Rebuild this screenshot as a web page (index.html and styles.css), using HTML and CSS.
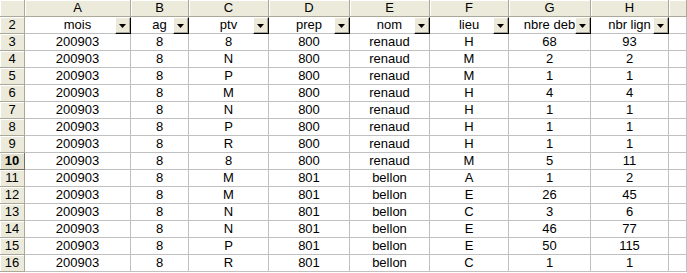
FILE: index.html
```html
<!DOCTYPE html>
<html>
<head>
<meta charset="utf-8">
<link rel="stylesheet" href="styles.css">
</head>
<body>
<div class="sheet">
  <div class="hd corner"></div>
  <div class="hd col">A</div><div class="hd col">B</div><div class="hd col">C</div><div class="hd col">D</div><div class="hd col">E</div><div class="hd col">F</div><div class="hd col">G</div><div class="hd col">H</div><div class="hd col"></div>

  <div class="hd row">2</div>
  <div class="c f">mois<span class="dd"></span></div><div class="c f">ag<span class="dd"></span></div><div class="c f">ptv<span class="dd"></span></div><div class="c f">prep<span class="dd"></span></div><div class="c f">nom<span class="dd"></span></div><div class="c f">lieu<span class="dd"></span></div><div class="c f">nbre deb<span class="dd"></span></div><div class="c f">nbr lign<span class="dd"></span></div><div class="c"></div>

  <div class="hd row">3</div>
  <div class="c">200903</div><div class="c">8</div><div class="c">8</div><div class="c">800</div><div class="c">renaud</div><div class="c">H</div><div class="c">68</div><div class="c">93</div><div class="c"></div>
  <div class="hd row">4</div>
  <div class="c">200903</div><div class="c">8</div><div class="c">N</div><div class="c">800</div><div class="c">renaud</div><div class="c">M</div><div class="c">2</div><div class="c">2</div><div class="c"></div>
  <div class="hd row">5</div>
  <div class="c">200903</div><div class="c">8</div><div class="c">P</div><div class="c">800</div><div class="c">renaud</div><div class="c">M</div><div class="c">1</div><div class="c">1</div><div class="c"></div>
  <div class="hd row">6</div>
  <div class="c">200903</div><div class="c">8</div><div class="c">M</div><div class="c">800</div><div class="c">renaud</div><div class="c">H</div><div class="c">4</div><div class="c">4</div><div class="c"></div>
  <div class="hd row">7</div>
  <div class="c">200903</div><div class="c">8</div><div class="c">N</div><div class="c">800</div><div class="c">renaud</div><div class="c">H</div><div class="c">1</div><div class="c">1</div><div class="c"></div>
  <div class="hd row">8</div>
  <div class="c">200903</div><div class="c">8</div><div class="c">P</div><div class="c">800</div><div class="c">renaud</div><div class="c">H</div><div class="c">1</div><div class="c">1</div><div class="c"></div>
  <div class="hd row">9</div>
  <div class="c">200903</div><div class="c">8</div><div class="c">R</div><div class="c">800</div><div class="c">renaud</div><div class="c">H</div><div class="c">1</div><div class="c">1</div><div class="c"></div>
  <div class="hd row active">10</div>
  <div class="c">200903</div><div class="c">8</div><div class="c">8</div><div class="c">800</div><div class="c">renaud</div><div class="c">M</div><div class="c">5</div><div class="c">11</div><div class="c"></div>
  <div class="hd row">11</div>
  <div class="c">200903</div><div class="c">8</div><div class="c">M</div><div class="c">801</div><div class="c">bellon</div><div class="c">A</div><div class="c">1</div><div class="c">2</div><div class="c"></div>
  <div class="hd row">12</div>
  <div class="c">200903</div><div class="c">8</div><div class="c">M</div><div class="c">801</div><div class="c">bellon</div><div class="c">E</div><div class="c">26</div><div class="c">45</div><div class="c"></div>
  <div class="hd row">13</div>
  <div class="c">200903</div><div class="c">8</div><div class="c">N</div><div class="c">801</div><div class="c">bellon</div><div class="c">C</div><div class="c">3</div><div class="c">6</div><div class="c"></div>
  <div class="hd row">14</div>
  <div class="c">200903</div><div class="c">8</div><div class="c">N</div><div class="c">801</div><div class="c">bellon</div><div class="c">E</div><div class="c">46</div><div class="c">77</div><div class="c"></div>
  <div class="hd row">15</div>
  <div class="c">200903</div><div class="c">8</div><div class="c">P</div><div class="c">801</div><div class="c">bellon</div><div class="c">E</div><div class="c">50</div><div class="c">115</div><div class="c"></div>
  <div class="hd row">16</div>
  <div class="c">200903</div><div class="c">8</div><div class="c">R</div><div class="c">801</div><div class="c">bellon</div><div class="c">C</div><div class="c">1</div><div class="c">1</div><div class="c"></div>
</div>
</body>
</html>
```

FILE: styles.css
```css
html, body {
  margin: 0;
  padding: 0;
  background: #ffffff;
}

.sheet {
  display: grid;
  grid-template-columns: 25px 106px 58px 80px 81px 80px 79px 82px 78px 1fr;
  grid-auto-rows: 17px;
  width: 687px;
  font-family: "Liberation Sans", Arial, sans-serif;
  font-size: 13px;
  color: #000;
}

.sheet > div {
  box-sizing: border-box;
  position: relative;
  white-space: nowrap;
}

.hd {
  background: #ebeadb;
  border-right: 1px solid #aca899;
  border-bottom: 1px solid #aca899;
  box-shadow: inset 1px 1px 0 #ffffff;
  display: flex;
  align-items: center;
  justify-content: center;
  line-height: 16px;
}

.row.active {
  font-weight: bold;
  background: #e2dfcc;
  border-right-color: #716f64;
  border-bottom-color: #716f64;
}

.c {
  border-right: 1px solid #c0c0c0;
  border-bottom: 1px solid #c0c0c0;
  text-align: center;
  line-height: 16px;
  overflow: hidden;
}

.c.f {
  overflow: visible;
}

.dd {
  position: absolute;
  top: 0;
  right: -1px;
  bottom: -1px;
  width: 16px;
  box-sizing: border-box;
  background: #ece9d8;
  border-top: 1px solid #ffffff;
  border-left: 1px solid #ffffff;
  border-right: 1px solid #000000;
  border-bottom: 1px solid #000000;
  box-shadow: inset -1px -1px 0 #aca899;
  z-index: 2;
}

.dd::after {
  content: "";
  position: absolute;
  left: 3px;
  top: 6px;
  width: 7px;
  height: 4px;
  background: #000000;
  clip-path: polygon(0 0, 100% 0, 50% 100%);
}
```
